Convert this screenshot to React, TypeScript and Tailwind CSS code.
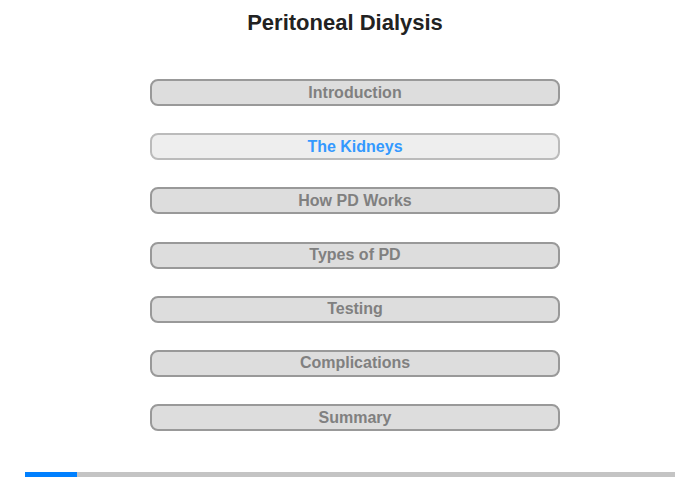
import React from 'react';

const sections = ['Introduction', 'The Kidneys', 'How PD Works', 'Types of PD', 'Testing', 'Complications', 'Summary'];
const active = 1;

export default function App() {
    return (
        <div className="w-[700px] h-[480px] bg-white flex flex-col" style={{ fontFamily: '"Liberation Sans", Arial, sans-serif' }}>
            <h1 className="w-[690px] pt-[10px] text-center text-[22px] leading-[26px] font-bold text-[#222]">
                Peritoneal Dialysis
            </h1>

            <div className="mt-[43px] pl-[150px] flex flex-col gap-[27.2px]">
                {sections.map((s, i) => (
                    <button
                        key={s}
                        className={
                            i === active
                                ? 'w-[410px] h-[27px] rounded-[8px] border-2 border-[#bbbbbb] bg-[#eeeeee] text-[#3399ff] text-[16px] font-bold leading-none'
                                : 'w-[410px] h-[27px] rounded-[8px] border-2 border-[#999999] bg-[#dddddd] text-[#808080] text-[16px] font-bold leading-none'
                        }
                    >
                        {s}
                    </button>
                ))}
            </div>

            <div className="mt-auto mb-[3px] mx-[25px] h-[5px] bg-[#c4c4c4] flex">
                <div className="w-[52px] h-full bg-[#0080ff]" />
            </div>
        </div>
    );
}
